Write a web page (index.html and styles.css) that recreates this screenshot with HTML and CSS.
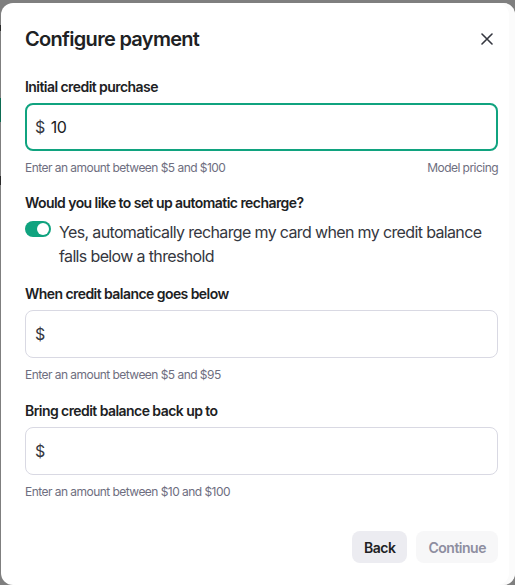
FILE: index.html
```html
<!DOCTYPE html>
<html>
<head>
<meta charset="utf-8">
<link rel="stylesheet" href="styles.css">
</head>
<body>
<div class="page-behind">
  <span class="hint hint-dark1"></span>
  <span class="hint hint-green"></span>
  <span class="hint hint-dark2"></span>
</div>
<div class="modal">
  <div class="modal-header">
    <h2 class="modal-title">Configure payment</h2>
    <button class="close-btn" aria-label="Close">
      <svg width="12" height="12" viewBox="0 0 12 12"><path d="M1 1L11 11M11 1L1 11" stroke="#353740" stroke-width="1.6" stroke-linecap="round"/></svg>
    </button>
  </div>

  <div class="field">
    <label class="field-label">Initial credit purchase</label>
    <div class="input input-focused"><span class="currency">$</span><span class="value">10</span></div>
    <div class="helper-row">
      <span class="helper">Enter an amount between $5 and $100</span>
      <span class="helper">Model pricing</span>
    </div>
  </div>

  <div class="field field-question">
    <label class="field-label">Would you like to set up automatic recharge?</label>
    <div class="toggle-row">
      <span class="toggle"><span class="knob"></span></span>
      <span class="toggle-text">Yes, automatically recharge my card when my credit balance falls below a threshold</span>
    </div>
  </div>

  <div class="field field-gap">
    <label class="field-label">When credit balance goes below</label>
    <div class="input"><span class="currency">$</span></div>
    <div class="helper-row"><span class="helper">Enter an amount between $5 and $95</span></div>
  </div>

  <div class="field field-gap2">
    <label class="field-label">Bring credit balance back up to</label>
    <div class="input"><span class="currency">$</span></div>
    <div class="helper-row"><span class="helper">Enter an amount between $10 and $100</span></div>
  </div>

  <div class="footer">
    <button class="btn btn-back">Back</button>
    <button class="btn btn-continue">Continue</button>
  </div>
</div>
</body>
</html>
```

FILE: styles.css
```css
html, body {
  margin: 0;
  padding: 0;
}
body {
  width: 515px;
  height: 585px;
  background: #7f7f7f;
  overflow: hidden;
  font-family: Inter, "Noto Sans", sans-serif;
  letter-spacing: -0.035em;
  color: #202123;
  position: relative;
}
.page-behind {
  position: absolute;
  left: 0;
  top: 0;
  width: 1px;
  height: 585px;
}
.hint {
  position: absolute;
  left: 0;
  width: 1px;
}
.hint-dark1 { top: 25px; height: 6px; background: #2a2a2a; }
.hint-green { top: 98px; height: 24px; background: #0d6b52; }
.hint-dark2 { top: 176px; height: 9px; background: #2a2a2a; }

.modal {
  position: absolute;
  left: 1px;
  top: 3px;
  width: 514px;
  height: 582px;
  box-sizing: border-box;
  background: #fff;
  border-radius: 12px;
  padding: 22px 17px 22px 24px;
  display: flex;
  flex-direction: column;
  box-shadow: inset -6px 0 0 #fbfbfb;
}
.modal-header {
  display: flex;
  align-items: center;
  justify-content: space-between;
  margin-bottom: 24px;
}
.modal-title {
  margin: 0;
  font-size: 20px;
  line-height: 28px;
  font-weight: 600;
  color: #202123;
  letter-spacing: -0.035em;
}
.close-btn {
  border: 0;
  background: none;
  padding: 0;
  width: 12px;
  height: 12px;
  margin-right: 5px;
  display: flex;
}
.field {
  display: flex;
  flex-direction: column;
}
.field-label {
  font-size: 14px;
  line-height: 20px;
  font-weight: 600;
  color: #202123;
  margin-bottom: 6px;
}
.input {
  height: 48px;
  box-sizing: border-box;
  border: 1px solid #d9d9e3;
  border-radius: 8px;
  display: flex;
  align-items: center;
  padding-left: 9px;
  font-size: 16px;
  color: #353740;
}
.input-focused {
  border: 2px solid #10a37f;
  padding-left: 8px;
}
.currency {
  color: #353740;
}
.value {
  margin-left: 6px;
  color: #202123;
}
.helper-row {
  display: flex;
  justify-content: space-between;
  margin-top: 9px;
}
.helper {
  font-size: 12px;
  line-height: 16px;
  color: #6e6e80;
  letter-spacing: -0.045em;
}
.field-question {
  margin-top: 17px;
}
.toggle-row {
  display: flex;
  align-items: flex-start;
  gap: 8px;
  margin-top: 1px;
}
.toggle {
  flex: none;
  width: 26px;
  height: 16px;
  border-radius: 8px;
  background: #10a37f;
  margin-top: 1px;
  display: flex;
  justify-content: flex-end;
  align-items: center;
  padding: 0 2px;
  box-sizing: border-box;
}
.knob {
  width: 12px;
  height: 12px;
  border-radius: 50%;
  background: #fff;
}
.toggle-text {
  font-size: 16px;
  line-height: 24px;
  color: #353740;
  letter-spacing: -0.04em;
}
.field-gap {
  margin-top: 16px;
}
.field-gap2 {
  margin-top: 18px;
}
.footer {
  margin-top: auto;
  display: flex;
  justify-content: flex-end;
  gap: 9px;
}
.btn {
  height: 32px;
  border: 0;
  border-radius: 8px;
  padding: 0 12px;
  font-family: Inter, "Noto Sans", sans-serif;
  letter-spacing: -0.035em;
  font-size: 14px;
  font-weight: 600;
}
.btn-back {
  background: #ececf1;
  color: #202123;
}
.btn-continue {
  background: #f7f7f8;
  color: #8e8ea0;
}
```
